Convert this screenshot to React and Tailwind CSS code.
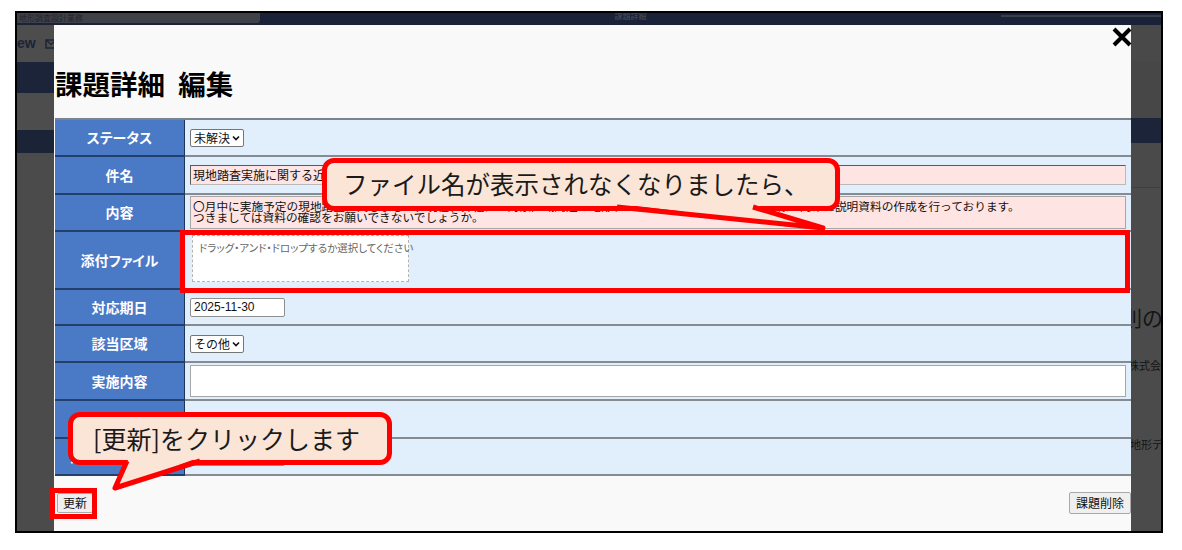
import React from 'react';

const jp = "font-['Noto_Sans_CJK_JP','Noto_Sans',sans-serif]";

const Chevron = () => (
  <svg width="8" height="6" viewBox="0 0 8 6" className="ml-[2px]">
    <path d="M1 1.5 L4 4.5 L7 1.5" fill="none" stroke="#111" strokeWidth="1.6" />
  </svg>
);

const Select = ({ value }) => (
  <div className="inline-flex items-center h-[18px] pl-[3px] pr-[3px] border border-[#767676] rounded-[2px] bg-white text-[12px] text-[#111] leading-none">
    <span>{value}</span>
    <Chevron />
  </div>
);

const DateBox = ({ value }) => (
  <div className="flex items-center w-[95px] h-[19px] pl-[3px] border border-[#8f8f8f] rounded-[2px] bg-white text-[12px] text-[#111] font-['Liberation_Sans',sans-serif]">
    {value}
  </div>
);

const Row = ({ label, height, children, align = 'items-center' }) => (
  <div className={`flex ${height}`}>
    <div className="w-[130px] shrink-0 bg-[#4a79c6] border-r border-r-[#1f3458] border-b-2 border-b-[#23406c] flex items-center justify-center text-white font-bold text-[14px] [font-feature-settings:'palt'] whitespace-nowrap overflow-hidden">
      {label}
    </div>
    <div className={`flex-1 min-w-0 bg-[#e1eefc] border-b-2 border-b-[#858b93] flex ${align} pl-[5px] pr-[5px]`}>
      {children}
    </div>
  </div>
);

export default function App() {
  return (
    <div className={`w-[1182px] h-[550px] bg-white relative overflow-hidden pt-[11px] pl-[15px] ${jp}`}>
      {/* captured page frame */}
      <div className="w-[1148px] h-[522px] border-2 border-black bg-[#4b4b4b] flex flex-col relative overflow-hidden">
        {/* dimmed page header */}
        <div className="h-[12px] shrink-0 bg-[#1a2238] flex items-start justify-between">
          <div className="w-[243px] h-[10px] bg-[#3f4148] rounded-br-[3px] text-[8px] leading-[10px] text-[#22252c] pl-[2px] overflow-hidden whitespace-nowrap">
            地形調査設計業務
          </div>
          <div className="text-[8px] leading-[6px] text-[#4a4f5c]">課題詳細</div>
          <div className="w-[160px] h-[2px] mt-[2px] bg-[#3a3f4c]" />
        </div>

        <div className="flex flex-1 min-h-0">
          {/* left dimmed strip */}
          <div className="w-[37px] shrink-0 flex flex-col">
            <div className="h-[37px] bg-[#4d4d4d] flex items-center gap-[9px] text-[14px] font-bold text-[#1b2438] font-['Liberation_Sans',sans-serif] overflow-hidden">
              <span>ew</span>
              <svg width="12" height="10" viewBox="0 0 12 10" className="shrink-0">
                <rect x="1" y="1" width="10" height="8" fill="none" stroke="#1b2438" strokeWidth="1.5" />
                <path d="M1 1 L6 5.5 L11 1" fill="none" stroke="#1b2438" strokeWidth="1.3" />
              </svg>
            </div>
            <div className="h-[31px] bg-[#1c2439]" />
            <div className="h-[37px] bg-[#4d4d4d]" />
            <div className="h-[23px] bg-[#1b2337]" />
            <div className="flex-1 bg-[#4b4b4b]" />
          </div>

          <div className="flex-1" />

          {/* right dimmed strip */}
          <div className="w-[30px] shrink-0 flex flex-col overflow-hidden">
            <div className="h-[37px] bg-[#494949]" />
            <div className="h-[56px] bg-[#474747]" />
            <div className="h-[25px] bg-[#1b2438]" />
            <div className="h-[45px] bg-[#4a4a4a] border-b border-b-[#404040]" />
            <div className="flex-1 bg-[#4b4b4b] text-[#141414] whitespace-nowrap">
              <div className="mt-[118px] ml-[-10px] text-[21px] leading-[22px]">則の</div>
              <div className="mt-[31px] ml-[-3px] text-[11px] leading-[12px]">株式会社</div>
              <div className="mt-[67px] ml-[-1px] text-[11px] leading-[12px]">地形データ</div>
            </div>
          </div>
        </div>

        {/* modal */}
        <div className="absolute left-[37px] top-[12px] bottom-0 w-[1077px] bg-[#f9f9f9] flex flex-col pl-px">
          <svg width="22" height="20" viewBox="0 0 22 20" className="absolute right-[-2px] top-[2px]">
            <path d="M3 2 L19 18 M19 2 L3 18" stroke="#000" strokeWidth="4" />
          </svg>

          <h1 className="pt-[40px] h-[76px] text-[27.5px] leading-[36px] font-bold text-black whitespace-nowrap">
            課題詳細 <span className="ml-[7px]">編集</span>
          </h1>

          <div className="mt-[17px] border-t-2 border-t-[#7d838b] text-[12px] text-[#111]">
            <Row label="ステータス" height="h-[37px]">
              <Select value="未解決" />
            </Row>
            <Row label="件名" height="h-[38px]">
              <div className="w-full h-[20px] bg-[#ffe4e4] border border-[#5a5a5a] border-b-[#b9b9b9] border-r-[#b9b9b9] pl-[2px] flex items-center whitespace-nowrap overflow-hidden">
                現地踏査実施に関する近隣住民説明会の開催について
              </div>
            </Row>
            <Row label="内容" height="h-[37px]">
              <div className="w-full h-[33px] bg-[#ffe4e4] border border-[#a6a6a6] pl-[2px] pt-[3px] text-[11.7px] leading-[11px] whitespace-nowrap overflow-hidden">
                <div>〇月中に実施予定の現地踏査に関しまして、現在、弊社にて対象区域周辺の地形データの整理および関係者の皆様へ向けた説明資料の作成を行っております。</div>
                <div>つきましては資料の確認をお願いできないでしょうか。</div>
              </div>
            </Row>
            <Row label="添付ファイル" height="h-[58px]" align="items-start">
              <div className="mt-[3px] ml-[2px] w-[217px] h-[47px] bg-white border border-dashed border-[#b3b3b3] pl-[6px] pt-[5px] text-[10.5px] leading-[14px] text-[#666] [font-feature-settings:'palt'] whitespace-nowrap">
                ドラッグ・アンド・ドロップするか選択してください
              </div>
            </Row>
            <Row label="対応期日" height="h-[36px]">
              <DateBox value="2025-11-30" />
            </Row>
            <Row label="該当区域" height="h-[37px]">
              <Select value="その他" />
            </Row>
            <Row label="実施内容" height="h-[38px]">
              <div className="w-full h-[32px] bg-white border border-[#a6a6a6]" />
            </Row>
            <Row label="実施結果" height="h-[38px]">
              <div />
            </Row>
            <Row label="追加調査予定日" height="h-[37px]">
              <DateBox value="" />
            </Row>
          </div>

          <div className="flex-1 flex justify-between items-start pl-[2px] pt-[16px]">
            <button className="h-[20px] px-[5px] bg-[#efefef] border border-[#a9a9a9] rounded-[2px] text-[12px] leading-none text-[#111] mt-px">更新</button>
            <button className="h-[22px] px-[6px] bg-[#efefef] border border-[#a9a9a9] rounded-[2px] text-[12px] leading-none text-[#111]">課題削除</button>
          </div>
        </div>
      </div>

      {/* annotations */}
      <div className="absolute left-[180px] top-[230px] w-[950px] h-[63px] border-[5px] border-[#ff0000]" />
      <div className="absolute left-[50px] top-[488px] w-[47px] h-[31px] border-[5px] border-[#ff0000]" />

      <div className="absolute left-[322px] top-[158px] w-[518px] h-[53px] border-[5px] border-[#ff0000] rounded-[12px] bg-[#fbe5d6] flex items-center pl-[16px] text-[24.5px] text-[#1a1a1a] whitespace-nowrap">
        ファイル名が表示されなくなりましたら、
      </div>
      <div className="absolute left-[68px] top-[412px] w-[324px] h-[53px] border-[5px] border-[#ff0000] rounded-[12px] bg-[#fbe5d6] flex items-center pl-[20px] text-[25px] text-[#1a1a1a] whitespace-nowrap">
        [更新]をクリックします
      </div>

      <svg className="absolute left-0 top-0 pointer-events-none" width="1182" height="550" viewBox="0 0 1182 550">
        <polygon points="619,204 823,228 751,204" fill="#fbe5d6" />
        <polyline points="617,207 823,228 753,207" fill="none" stroke="#ff0000" strokeWidth="5" strokeLinejoin="round" />
        <polygon points="129,458 115,488 198,458" fill="#fbe5d6" />
        <polyline points="127,461 115,488 200,461" fill="none" stroke="#ff0000" strokeWidth="5" strokeLinejoin="round" />
      </svg>
    </div>
  );
}
